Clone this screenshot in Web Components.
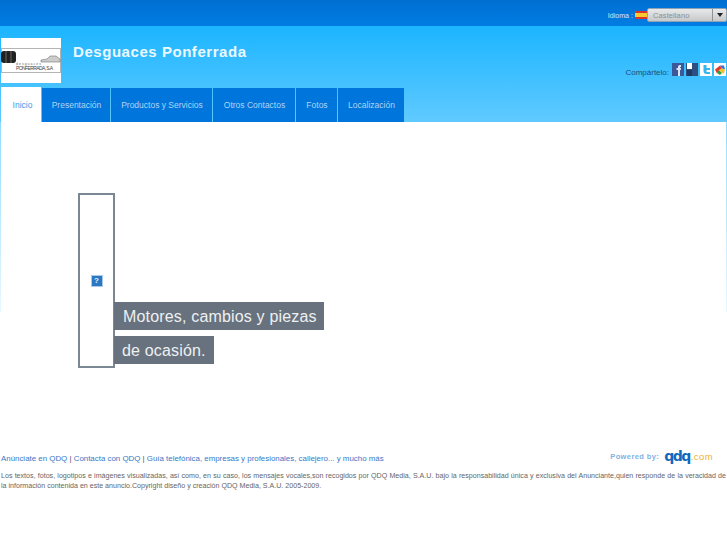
<!DOCTYPE html>
<html lang="es">
<head>
<meta charset="utf-8">
<title>Desguaces Ponferrada</title>
<style>
  html, body { margin: 0; padding: 0; background: #fff; }
  body { font-family: "Liberation Sans", Arial, sans-serif; }
</style>
</head>
<body>
<site-page>
  <top-bar></top-bar>
  <site-header></site-header>
  <main-menu></main-menu>
  <hero-area></hero-area>
  <site-footer></site-footer>
</site-page>

<script>
class SitePage extends HTMLElement {
  constructor() {
    super();
    this.attachShadow({ mode: 'open' }).innerHTML = `
      <style>
        :host { display: block; height: 545px; overflow: hidden; background: #fff; }
        .skin {
          display: flex;
          flex-direction: column;
          height: 100%;
          background: linear-gradient(#1bb5ff 26px, #60caff 122px, #fff 122px);
        }
      </style>
      <div class="skin"><slot></slot></div>`;
  }
}

class TopBar extends HTMLElement {
  constructor() {
    super();
    this.attachShadow({ mode: 'open' }).innerHTML = `
      <style>
        :host {
          display: flex;
          justify-content: flex-end;
          align-items: center;
          height: 26px;
          padding-top: 4px;
          box-sizing: border-box;
          background: linear-gradient(#006fd2, #007de3);
          font-size: 7.500px;
          color: #d4e8fa;
        }
        .lang { margin-right: 2px; font-size: 7px; letter-spacing: .05px; }
        .flag { width: 12px; height: 8px; background: linear-gradient(#d9342a 25%, #f8c830 25%, #f8c830 75%, #d9342a 75%); }
        .select {
          display: flex;
          align-items: stretch;
          width: 80px;
          height: 14px;
          border: 1px solid #8fa3b5;
          border-radius: 2px;
          box-sizing: border-box;
          background: linear-gradient(#e8e9ea, #c6c8ca);
          color: #8a8f94;
        }
        .value { flex: 1; padding: 2px 0 0 5px; letter-spacing: .1px; }
        .arrow {
          width: 13px;
          border-left: 1px solid #8d9296;
          display: flex;
          align-items: center;
          justify-content: center;
        }
        .arrow i { border: 3.5px solid transparent; border-top: 4px solid #222; border-bottom: 0; }
      </style>
      <span class="lang">Idioma :</span>
      <span class="flag"></span>
      <div class="select"><span class="value">Castellano</span><span class="arrow"><i></i></span></div>`;
  }
}

class SiteHeader extends HTMLElement {
  constructor() {
    super();
    this.attachShadow({ mode: 'open' }).innerHTML = `
      <style>
        :host {
          display: flex;
          height: 61px;
          padding-top: 12px;
          box-sizing: border-box;
        }
        .logo {
          width: 60px;
          height: 45px;
          margin-left: 1px;
          background: #fff;
          display: flex;
          align-items: center;
        }
        .logo svg { display: block; }
        h1 {
          margin: 5px 0 0 12px;
          font-size: 15px;
          line-height: 18px;
          font-weight: bold;
          letter-spacing: .55px;
          color: #ecf8ff;
        }
        .share {
          margin-left: auto;
          display: flex;
          gap: 2px;
          padding: 25px 1px 0 0;
          height: 14px;
          font-size: 8px;
          color: #1d4f7c;
        }
        .share span { margin: 5px 1px 0 0; }
        .share svg { display: block; }
      </style>
      <div class="logo">
        <svg width="60" height="25" viewBox="0 0 60 25">
          <rect x=".5" y=".5" width="59" height="24" fill="#fff" stroke="#b4b4b4"/>
          <rect x="0" y="3" width="15" height="12" rx="3" fill="#222"/>
          <path d="M5 3v12M10 3v12" stroke="#666"/>
          <path d="M40 12l6-1 3-3h6l4 3v3H40z" fill="#ccc" stroke="#777" stroke-width=".6"/>
          <text x="15" y="16.500" font-size="3.500" letter-spacing="1" fill="#666" font-family="Liberation Sans">desguaces</text>
          <text x="15" y="22" font-size="5" textLength="37" fill="#444" font-family="Liberation Sans">PONFERRADA, S.A</text>
        </svg>
      </div>
      <h1>Desguaces Ponferrada</h1>
      <div class="share">
        <span>Compártelo:</span>
        <svg width="12" height="13" viewBox="0 0 12 13"><rect width="12" height="13" fill="#3b5998"/><path d="M6 13V7H4.500V5H6V3.500C6 2.500 7 2 9 2v2C8 4 8 4 8 5h1L8.800 7H8v6z" fill="#dfe6f2"/></svg>
        <svg width="12" height="13" viewBox="0 0 12 13"><rect width="12" height="13" fill="#2f4f7f"/><rect x="1" width="5" height="6" fill="#fff"/><rect x="1" y="7" width="5" height="6" fill="#1f3a66"/></svg>
        <svg width="12" height="13" viewBox="0 0 12 13"><rect width="12" height="13" fill="#fff"/><path d="M3.500 2v6c0 2 1 3 3 3H10V9H6.500V7H10V5H6.500V2z" fill="#35b6ee"/></svg>
        <svg width="12" height="13" viewBox="0 0 12 13"><rect width="12" height="13" fill="#fff"/><path d="M1 6.500l5-4 2 3-3 2-2 3z" fill="#e33a2c"/><path d="M3 10l2-3 3 3-2 2z" fill="#2f9e44"/><path d="M6 2.500h4l1 4-3-1z" fill="#3573d9"/><path d="M8 5.500l3 1-1 4-2-.5-3-3z" fill="#f5c12e"/></svg>
      </div>`;
  }
}

class MainMenu extends HTMLElement {
  constructor() {
    super();
    const items = [
      ['Inicio', 40, true],
      ['Presentación', 68],
      ['Productos y Servicios', 101],
      ['Otros Contactos', 82],
      ['Fotos', 41],
      ['Localización', 66]
    ];
    const links = items.map(([label, width, active]) =>
      `<a class="${active ? 'active' : ''}" style="width:${width}px">${label}</a>`).join('');
    this.attachShadow({ mode: 'open' }).innerHTML = `
      <style>
        :host { display: flex; height: 35px; padding-left: 1px; box-sizing: border-box; }
        a {
          display: flex;
          align-items: center;
          justify-content: center;
          flex: none;
          margin-right: 1px;
          height: 34px;
          margin-top: 1px;
          padding-left: 1px;
          box-sizing: border-box;
          background: #0076dc;
          color: #aed4f5;
          font-size: 8.500px;
        }
        a.active { background: #fff; color: #3d9be9; height: 35px; margin: 0 1px 0 0; padding: 1px 0 0 3px; }
      </style>
      ${links}`;
  }
}

class HeroArea extends HTMLElement {
  constructor() {
    super();
    this.attachShadow({ mode: 'open' }).innerHTML = `
      <style>
        :host {
          display: flex;
          height: 332px;
          padding: 71px 0 0 78px;
          box-sizing: border-box;
          background:
            linear-gradient(#8fdcff, #e8f8ff) 0 0 / 1px 190px no-repeat,
            linear-gradient(#8fdcff, #e8f8ff) 100% 0 / 1px 190px no-repeat;
        }
        .frame {
          width: 37px;
          height: 175px;
          box-sizing: border-box;
          border: 2px solid #7c8794;
          display: flex;
          align-items: center;
          justify-content: center;
          flex: none;
        }
        .broken {
          width: 12px;
          height: 12px;
          margin-top: 1px;
          box-sizing: border-box;
          border: 1px solid #a9c8ec;
          background: #2a78c4;
          color: #e6f2fc;
          font-size: 8px;
          line-height: 10px;
          font-weight: bold;
          text-align: center;
        }
        .captions {
          display: flex;
          flex-direction: column;
          align-items: flex-start;
          gap: 6px;
          margin: 109px 0 0 -1px;
        }
        .captions span {
          background: #67727e;
          color: #eef0f2;
          font-size: 16px;
          line-height: 27px;
          letter-spacing: .17px;
          padding: 1px 7px 0 9px;
        }
        .captions span + span { padding: 1px 8px 0; }
      </style>
      <div class="frame"><div class="broken">?</div></div>
      <div class="captions">
        <span>Motores, cambios y piezas</span>
        <span>de ocasión.</span>
      </div>`;
  }
}

class SiteFooter extends HTMLElement {
  constructor() {
    super();
    this.attachShadow({ mode: 'open' }).innerHTML = `
      <style>
        :host { display: block; font-size: 7.100px; padding-left: 1px; }
        .row { display: flex; justify-content: space-between; height: 18px; }
        .links { color: #3a78c8; font-size: 7.900px; line-height: 10px; }
        .links i { font-style: normal; color: #556; }
        .powered { display: flex; align-items: center; height: 18px; margin: -7px 14px 0 0; color: #7fb2e6; font-size: 7.500px; font-weight: bold; letter-spacing: .4px; gap: 5px; }
        .powered b { font-size: 9.500px; color: #f0b030; font-weight: normal; margin-left: -4px; }
        .powered em { font-family: "DejaVu Sans", sans-serif; font-style: normal; font-size: 14px; line-height: 16px; font-weight: bold; color: #1268bc; letter-spacing: -1.500px; }
        p { margin: 0; color: #666; line-height: 9.500px; width: 725px; text-align: justify; }
        .keep { white-space: nowrap; }
      </style>
      <div class="row">
        <div class="links">Anúnciate en QDQ <i>|</i> Contacta con QDQ <i>|</i> Guía telefónica, empresas y profesionales, callejero... y mucho más</div>
        <div class="powered">Powered by: <em>qdq</em><b>.com</b></div>
      </div>
      <p>Los textos, fotos, logotipos e imágenes visualizadas, así como, en su caso, los mensajes vocales,son recogidos por QDQ Media, S.A.U. bajo la responsabilidad única y exclusiva del Anunciante,quien responde de la veracidad de <span class="keep">la información</span> contenida en este anuncio.Copyright diseño y creación QDQ Media, S.A.U. 2005-2009.</p>`;
  }
}

customElements.define('site-page', SitePage);
customElements.define('top-bar', TopBar);
customElements.define('site-header', SiteHeader);
customElements.define('main-menu', MainMenu);
customElements.define('hero-area', HeroArea);
customElements.define('site-footer', SiteFooter);
</script>
</body>
</html>
